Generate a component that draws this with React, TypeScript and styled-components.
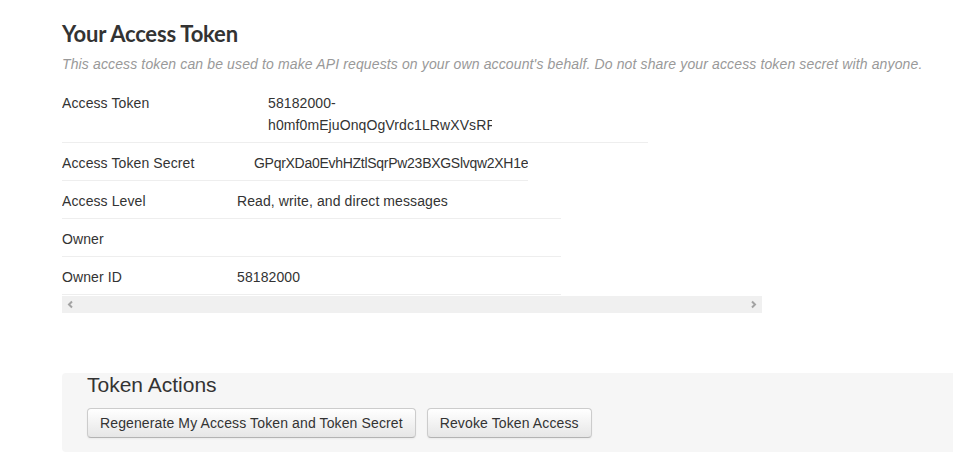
import React from "react";
import styled, { createGlobalStyle } from "styled-components";

const GlobalStyle = createGlobalStyle`
  html, body {
    margin: 0;
    padding: 0;
    background: #fff;
  }
  body {
    font-family: "Liberation Sans", Arial, sans-serif;
    font-size: 14px;
    color: #333;
    letter-spacing: 0.1px;
  }
`;

const Page = styled.div`
  padding: 20px 0 0 62px;
`;

const Title = styled.h1`
  margin: 0;
  font-family: Lato, "Open Sans", sans-serif;
  font-weight: 700;
  font-size: 22px;
  line-height: 28px;
  color: #333;
  letter-spacing: -0.2px;
`;

const Subtitle = styled.p`
  margin: 6px 0 0;
  font-style: italic;
  font-size: 14px;
  line-height: 20px;
  color: #999;
  letter-spacing: 0.13px;
`;

const TableScroller = styled.div`
  margin-top: 9px;
  width: 700px;
  overflow: hidden;
`;

const Row = styled.div<{ $label: number; $value: number }>`
  display: grid;
  grid-template-columns: ${(p) => p.$label}px ${(p) => p.$value}px;
  width: ${(p) => p.$label + p.$value}px;
  border-bottom: 1px solid #eee;
  font-size: 14px;
  line-height: 22px;
  color: #333;
`;

const Label = styled.div`
  padding: 9px 0 6px;
`;

const Value = styled.div<{ $clip?: number; $tight?: boolean }>`
  padding: 9px 0 6px;
  white-space: ${(p) => (p.$tight ? "nowrap" : "normal")};
  ${(p) => (p.$clip ? `width: ${p.$clip}px; overflow: hidden;` : "")}
  ${(p) => (p.$tight ? "letter-spacing: -0.28px;" : "")}
`;

const Scrollbar = styled.div`
  margin-top: 1px;
  height: 17px;
  background: #f0f0f0;
  display: flex;
  align-items: center;
  justify-content: space-between;
  padding: 0 4px;
`;

const Arrow = styled.svg`
  width: 9px;
  height: 9px;
  display: block;
`;

const ActionsBox = styled.section`
  margin-top: 60px;
  background: #f6f6f6;
  border-radius: 4px 0 0 4px;
  padding: 1px 0 14px 25px;
`;

const ActionsHeading = styled.h2`
  margin: 0;
  font-weight: 400;
  font-size: 21px;
  line-height: 22px;
  color: #333;
  letter-spacing: 0;
`;

const ButtonRow = styled.div`
  margin-top: 12px;
  display: flex;
  gap: 11px;
`;

const Button = styled.button`
  height: 30px;
  padding: 0 12px;
  font-family: "Liberation Sans", Arial, sans-serif;
  font-size: 14px;
  letter-spacing: 0.12px;
  color: #333;
  background: linear-gradient(#ffffff, #e6e6e6);
  border: 1px solid #ccc;
  border-bottom-color: #b3b3b3;
  border-radius: 4px;
  box-shadow: inset 0 1px 0 rgba(255, 255, 255, 0.2), 0 1px 2px rgba(0, 0, 0, 0.05);
  cursor: pointer;
`;

const ChevronLeft = () => (
  <Arrow viewBox="0 0 9 9">
    <path d="M6 1.5 L3 4.5 L6 7.5" fill="none" stroke="#a3a3a3" strokeWidth="2" />
  </Arrow>
);

const ChevronRight = () => (
  <Arrow viewBox="0 0 9 9">
    <path d="M3 1.5 L6 4.5 L3 7.5" fill="none" stroke="#a3a3a3" strokeWidth="2" />
  </Arrow>
);

export default function App() {
  return (
    <>
      <GlobalStyle />
      <Page>
        <Title>Your Access Token</Title>
        <Subtitle>
          This access token can be used to make API requests on your own account's behalf. Do not
          share your access token secret with anyone.
        </Subtitle>
        <TableScroller>
          <Row $label={206} $value={380}>
            <Label>Access Token</Label>
            <Value $clip={224}>58182000-h0mf0mEjuOnqOgVrdc1LRwXVsRP9kQvb3fTzA</Value>
          </Row>
          <Row $label={192} $value={274}>
            <Label>Access Token Secret</Label>
            <Value $clip={274} $tight>
              GPqrXDa0EvhHZtlSqrPw23BXGSlvqw2XH1e
            </Value>
          </Row>
          <Row $label={175} $value={324}>
            <Label>Access Level</Label>
            <Value>Read, write, and direct messages</Value>
          </Row>
          <Row $label={175} $value={324}>
            <Label>Owner</Label>
            <Value></Value>
          </Row>
          <Row $label={175} $value={324}>
            <Label>Owner ID</Label>
            <Value>58182000</Value>
          </Row>
          <Scrollbar>
            <ChevronLeft />
            <ChevronRight />
          </Scrollbar>
        </TableScroller>
        <ActionsBox>
          <ActionsHeading>Token Actions</ActionsHeading>
          <ButtonRow>
            <Button>Regenerate My Access Token and Token Secret</Button>
            <Button>Revoke Token Access</Button>
          </ButtonRow>
        </ActionsBox>
      </Page>
    </>
  );
}
